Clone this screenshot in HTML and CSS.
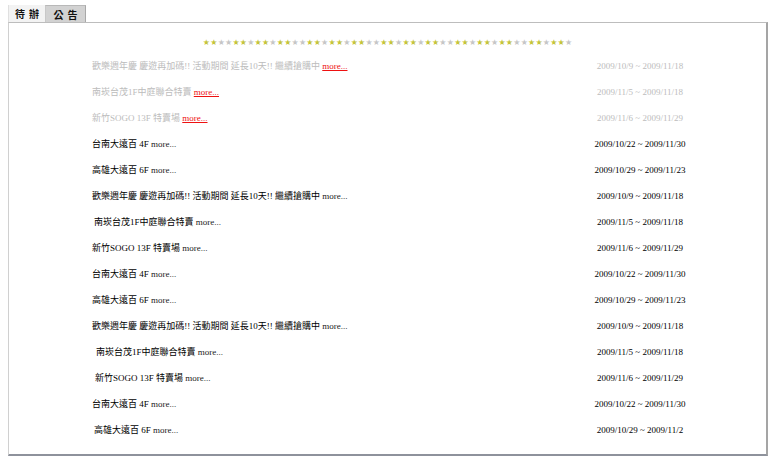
FILE: index.html
```html
<!DOCTYPE html>
<html lang="zh-Hant">
<head>
<meta charset="utf-8">
<title>待辦</title>
<link rel="stylesheet" href="styles.css">
</head>
<body>
<div class="page">
  <div class="tabs">
    <div class="tab tab-active">待辦</div>
    <div class="tab">公告</div>
  </div>
  <div class="panel">
    <div class="stars" id="stars"></div>
    <ul class="list">
      <li class="row faded"><span class="title">歡樂週年慶 慶遊再加碼!! 活動期間 延長10天!! 繼續搶購中 <a class="more">more...</a></span><span class="date">2009/10/9 ~ 2009/11/18</span></li>
      <li class="row faded"><span class="title">南崁台茂1F中庭聯合特賣 <a class="more">more...</a></span><span class="date">2009/11/5 ~ 2009/11/18</span></li>
      <li class="row faded"><span class="title">新竹SOGO 13F 特賣場 <a class="more">more...</a></span><span class="date">2009/11/6 ~ 2009/11/29</span></li>
      <li class="row"><span class="title">台南大遠百 4F <a class="more">more...</a></span><span class="date">2009/10/22 ~ 2009/11/30</span></li>
      <li class="row"><span class="title">高雄大遠百 6F <a class="more">more...</a></span><span class="date">2009/10/29 ~ 2009/11/23</span></li>
      <li class="row"><span class="title">歡樂週年慶 慶遊再加碼!! 活動期間 延長10天!! 繼續搶購中 <a class="more">more...</a></span><span class="date">2009/10/9 ~ 2009/11/18</span></li>
      <li class="row"><span class="title ind2">南崁台茂1F中庭聯合特賣 <a class="more">more...</a></span><span class="date">2009/11/5 ~ 2009/11/18</span></li>
      <li class="row"><span class="title">新竹SOGO 13F 特賣場 <a class="more">more...</a></span><span class="date">2009/11/6 ~ 2009/11/29</span></li>
      <li class="row"><span class="title">台南大遠百 4F <a class="more">more...</a></span><span class="date">2009/10/22 ~ 2009/11/30</span></li>
      <li class="row"><span class="title">高雄大遠百 6F <a class="more">more...</a></span><span class="date">2009/10/29 ~ 2009/11/23</span></li>
      <li class="row"><span class="title">歡樂週年慶 慶遊再加碼!! 活動期間 延長10天!! 繼續搶購中 <a class="more">more...</a></span><span class="date">2009/10/9 ~ 2009/11/18</span></li>
      <li class="row"><span class="title ind4">南崁台茂1F中庭聯合特賣 <a class="more">more...</a></span><span class="date">2009/11/5 ~ 2009/11/18</span></li>
      <li class="row"><span class="title ind3">新竹SOGO 13F 特賣場 <a class="more">more...</a></span><span class="date">2009/11/6 ~ 2009/11/29</span></li>
      <li class="row"><span class="title">台南大遠百 4F <a class="more">more...</a></span><span class="date">2009/10/22 ~ 2009/11/30</span></li>
      <li class="row"><span class="title ind2">高雄大遠百 6F <a class="more">more...</a></span><span class="date">2009/10/29 ~ 2009/11/2</span></li>
    </ul>
  </div>
</div>
<script>
  var s = document.getElementById('stars');
  var pat = [1,1,0,0,1,1,0,1,1,0];
  for (var i = 0; i < 50; i++) {
    var e = document.createElement('span');
    e.className = 'star ' + (pat[i % pat.length] ? 'star-y' : 'star-g');
    e.textContent = '★';
    s.appendChild(e);
  }
</script>
</body>
</html>
```

FILE: styles.css
```css
html, body {
  margin: 0;
  padding: 0;
  background: #ffffff;
}

.page {
  padding: 5px 0 0 8px;
  width: 760px;
  font-family: "Liberation Serif", "Noto Sans CJK TC", serif;
}

.tabs {
  display: flex;
  height: 17px;
}

.tab {
  font-family: "Noto Sans CJK TC", sans-serif;
  font-weight: bold;
  font-size: 10px;
  line-height: 17px;
  letter-spacing: 4px;
  text-align: center;
  color: #111;
  box-sizing: border-box;
}

.tab-active {
  width: 37px;
  padding-left: 4px;
  background: #f3f3f3;
  border-left: 1px solid #e0e0e0;
}

.tab:not(.tab-active) {
  width: 41px;
  padding-left: 4px;
  background: #d2d2d2;
  border-top: 1px solid #b8b8b8;
  border-right: 1px solid #a8a8a8;
  border-left: 1px solid #c8c8c8;
}

.panel {
  box-sizing: border-box;
  width: 760px;
  height: 434px;
  border-top: 1px solid #bdbdbd;
  border-left: 1px solid #d0d0d0;
  border-right: 2px solid #a5a5a5;
  border-bottom: 2px solid #8e929c;
  padding: 14px 0 0 82px;
}

.stars {
  display: flex;
  justify-content: center;
  margin-left: -82px;
  height: 12px;
  line-height: 12px;
  margin-bottom: 4px;
}

.star {
  display: inline-block;
  width: 7.4px;
  text-align: center;
  font-family: "DejaVu Sans", sans-serif;
  font-size: 8px;
}

.star-y { color: #c4c43a; }
.star-g { color: #c6c6c6; }

.list {
  list-style: none;
  margin: 0;
  padding: 0;
}

.row {
  display: grid;
  grid-template-columns: 484px 130px;
  height: 26px;
  line-height: 26px;
  font-size: 9px;
  color: #000;
}

.title {
  white-space: nowrap;
  padding-left: 1px;
}

.ind2 { padding-left: 3px; }
.ind3 { padding-left: 4px; }
.ind4 { padding-left: 5px; }

.date {
  text-align: center;
  white-space: nowrap;
}

.more {
  color: #222;
}

.faded {
  color: #bcbcbc;
}

.faded .more {
  color: #ee1111;
  text-decoration: underline;
}
```
